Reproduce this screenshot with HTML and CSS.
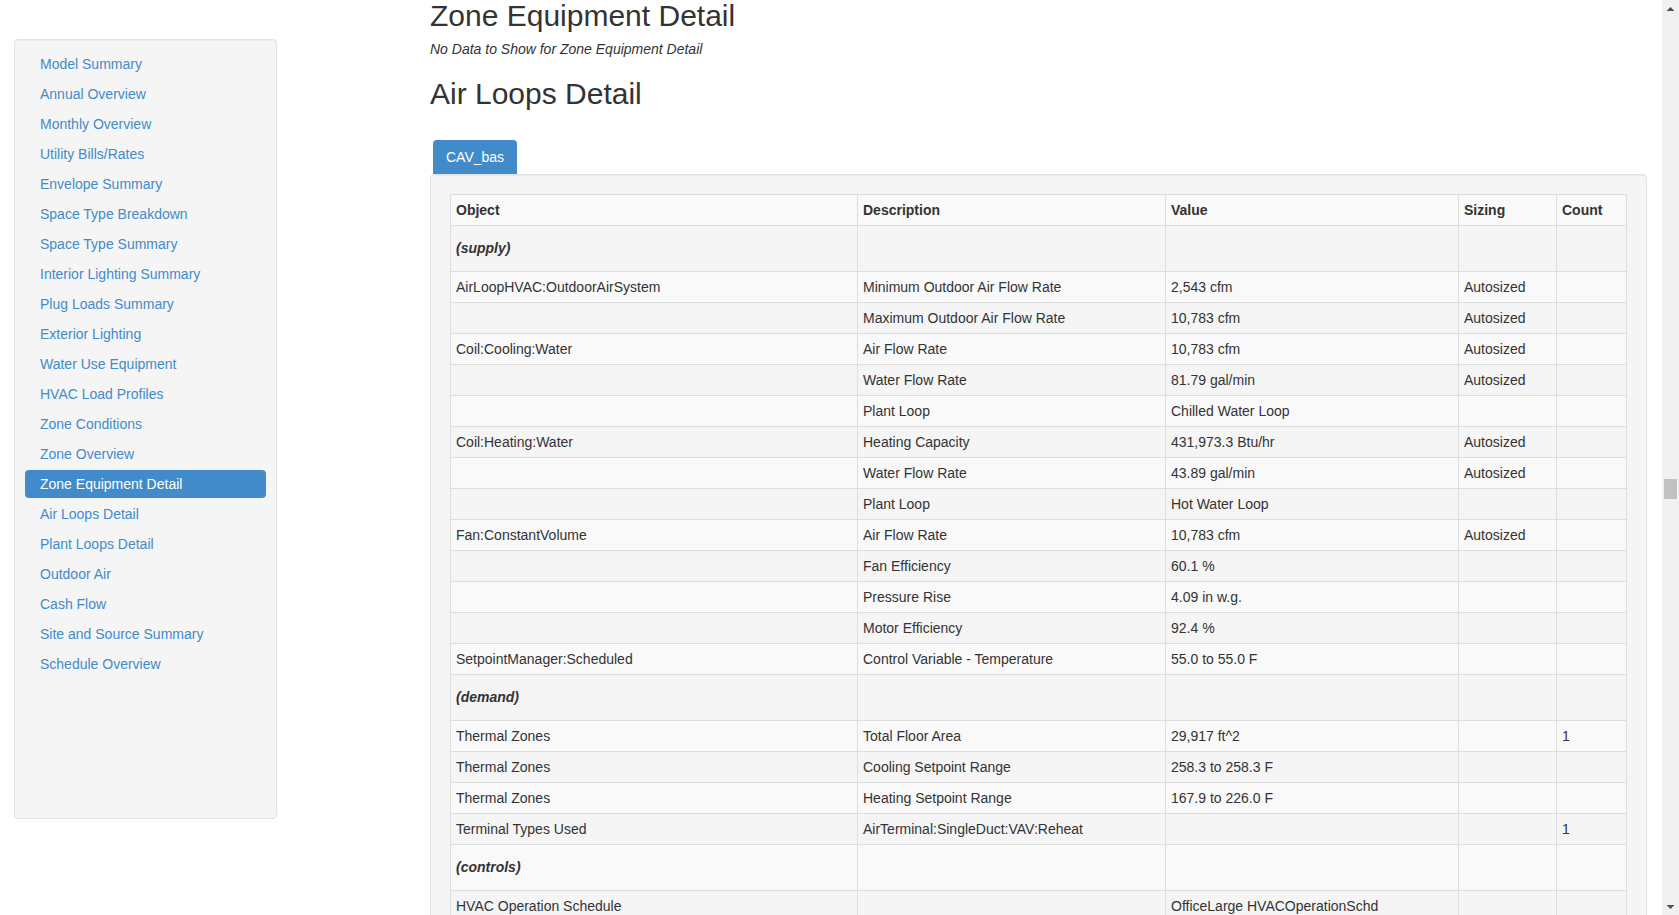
FILE: index.html
```html
<!DOCTYPE html>
<html>
<head>
<meta charset="utf-8">
<title>Report</title>
<link rel="stylesheet" href="styles.css">
</head>
<body>
<div class="viewport">
  <div class="side-col">
    <div class="well sidebar">
      <ul class="nav">
        <li><a>Model Summary</a></li>
        <li><a>Annual Overview</a></li>
        <li><a>Monthly Overview</a></li>
        <li><a>Utility Bills/Rates</a></li>
        <li><a>Envelope Summary</a></li>
        <li><a>Space Type Breakdown</a></li>
        <li><a>Space Type Summary</a></li>
        <li><a>Interior Lighting Summary</a></li>
        <li><a>Plug Loads Summary</a></li>
        <li><a>Exterior Lighting</a></li>
        <li><a>Water Use Equipment</a></li>
        <li><a>HVAC Load Profiles</a></li>
        <li><a>Zone Conditions</a></li>
        <li><a>Zone Overview</a></li>
        <li class="active"><a>Zone Equipment Detail</a></li>
        <li><a>Air Loops Detail</a></li>
        <li><a>Plant Loops Detail</a></li>
        <li><a>Outdoor Air</a></li>
        <li><a>Cash Flow</a></li>
        <li><a>Site and Source Summary</a></li>
        <li><a>Schedule Overview</a></li>
      </ul>
    </div>
  </div>
  <div class="main-col">
    <h2 class="h-first">Zone Equipment Detail</h2>
    <p class="nodata">No Data to Show for Zone Equipment Detail</p>
    <h2 class="h-second">Air Loops Detail</h2>
    <ul class="tabs">
      <li class="tab active"><a>CAV_bas</a></li>
    </ul>
    <div class="well panel">
      <table class="data">
        <colgroup>
          <col class="c-obj"><col class="c-desc"><col class="c-val"><col class="c-size"><col class="c-count">
        </colgroup>
        <tbody>
          <tr class="head"><td>Object</td><td>Description</td><td>Value</td><td>Sizing</td><td>Count</td></tr>
          <tr class="group"><td>(supply)</td><td></td><td></td><td></td><td></td></tr>
          <tr><td>AirLoopHVAC:OutdoorAirSystem</td><td>Minimum Outdoor Air Flow Rate</td><td>2,543 cfm</td><td>Autosized</td><td></td></tr>
          <tr><td></td><td>Maximum Outdoor Air Flow Rate</td><td>10,783 cfm</td><td>Autosized</td><td></td></tr>
          <tr><td>Coil:Cooling:Water</td><td>Air Flow Rate</td><td>10,783 cfm</td><td>Autosized</td><td></td></tr>
          <tr><td></td><td>Water Flow Rate</td><td>81.79 gal/min</td><td>Autosized</td><td></td></tr>
          <tr><td></td><td>Plant Loop</td><td>Chilled Water Loop</td><td></td><td></td></tr>
          <tr><td>Coil:Heating:Water</td><td>Heating Capacity</td><td>431,973.3 Btu/hr</td><td>Autosized</td><td></td></tr>
          <tr><td></td><td>Water Flow Rate</td><td>43.89 gal/min</td><td>Autosized</td><td></td></tr>
          <tr><td></td><td>Plant Loop</td><td>Hot Water Loop</td><td></td><td></td></tr>
          <tr><td>Fan:ConstantVolume</td><td>Air Flow Rate</td><td>10,783 cfm</td><td>Autosized</td><td></td></tr>
          <tr><td></td><td>Fan Efficiency</td><td>60.1 %</td><td></td><td></td></tr>
          <tr><td></td><td>Pressure Rise</td><td>4.09 in w.g.</td><td></td><td></td></tr>
          <tr><td></td><td>Motor Efficiency</td><td>92.4 %</td><td></td><td></td></tr>
          <tr><td>SetpointManager:Scheduled</td><td>Control Variable - Temperature</td><td>55.0 to 55.0 F</td><td></td><td></td></tr>
          <tr class="group"><td>(demand)</td><td></td><td></td><td></td><td></td></tr>
          <tr><td>Thermal Zones</td><td>Total Floor Area</td><td>29,917 ft^2</td><td></td><td>1</td></tr>
          <tr><td>Thermal Zones</td><td>Cooling Setpoint Range</td><td>258.3 to 258.3 F</td><td></td><td></td></tr>
          <tr><td>Thermal Zones</td><td>Heating Setpoint Range</td><td>167.9 to 226.0 F</td><td></td><td></td></tr>
          <tr><td>Terminal Types Used</td><td>AirTerminal:SingleDuct:VAV:Reheat</td><td></td><td></td><td>1</td></tr>
          <tr class="group"><td>(controls)</td><td></td><td></td><td></td><td></td></tr>
          <tr><td>HVAC Operation Schedule</td><td></td><td>OfficeLarge HVACOperationSchd</td><td></td><td></td></tr>
        </tbody>
      </table>
    </div>
  </div>
</div>
<div class="scrollbar">
  <div class="sb-btn"><svg width="9" height="6" viewBox="0 0 9 6"><path d="M0.5 5 L4.5 1 L8.5 5 Z" fill="#505050"/></svg></div>
  <div class="sb-track"><div class="sb-thumb"></div></div>
  <div class="sb-btn"><svg width="9" height="6" viewBox="0 0 9 6"><path d="M0.5 1 L4.5 5 L8.5 1 Z" fill="#505050"/></svg></div>
</div>
</body>
</html>
```
FILE: styles.css
```css
html, body {
  margin: 0;
  padding: 0;
  height: 100%;
  overflow: hidden;
}
body {
  display: flex;
  font-family: "Liberation Sans", Arial, sans-serif;
  font-size: 14px;
  line-height: 20px;
  color: #333;
  background: #fff;
}
.viewport {
  flex: 1;
  display: flex;
  overflow: hidden;
  min-width: 0;
}
.side-col {
  width: 416px;
  flex: none;
  padding-left: 14px;
  box-sizing: border-box;
}
.well {
  background: #f5f5f5;
  border: 1px solid #e3e3e3;
  border-radius: 4px;
  box-shadow: inset 0 1px 1px rgba(0,0,0,0.05);
}
.sidebar {
  margin-top: 39px;
  width: 263px;
  height: 780px;
  box-sizing: border-box;
  padding: 10px;
}
.nav {
  list-style: none;
  margin: 0;
  padding: 0;
}
.nav li + li {
  margin-top: 2px;
}
.nav a {
  display: block;
  padding: 4px 15px;
  border-radius: 4px;
  color: #428bca;
  line-height: 20px;
}
.nav li.active a {
  background: #428bca;
  color: #fff;
}
.main-col {
  flex: 1;
  min-width: 0;
  padding: 0 15px 0 14px;
}
h2 {
  font-weight: 500;
  font-size: 30px;
  line-height: 32px;
  margin: 0;
  color: #333;
}
.nodata {
  font-style: italic;
  margin: 7px 0 0;
}
.h-second {
  margin-top: 19px;
}
.tabs {
  list-style: none;
  margin: 30px 0 0;
  padding: 0 0 0 3px;
  display: flex;
}
.tab a {
  display: block;
  padding: 7px 13px;
  background: #428bca;
  color: #fff;
  border-radius: 4px 4px 0 0;
}
.panel {
  padding: 19px;
}
.data {
  width: 100%;
  border-collapse: collapse;
  table-layout: fixed;
  border: 1px solid #ddd;
}
.c-obj { width: 407px; }
.c-desc { width: 308px; }
.c-val { width: 293px; }
.c-size { width: 98px; }
.c-count { width: 70px; }
.data td {
  border: 1px solid #ddd;
  padding: 5px;
  line-height: 20px;
  height: 20px;
  vertical-align: top;
  white-space: nowrap;
  overflow: hidden;
}
.data tr:nth-child(odd) td {
  background: #f9f9f9;
}
.data tr.head td {
  font-weight: bold;
}
.data tr.group td {
  padding: 12px 5px 13px;
  font-weight: bold;
  font-style: italic;
}
.scrollbar {
  width: 17px;
  flex: none;
  background: #f1f1f1;
  display: flex;
  flex-direction: column;
}
.sb-btn {
  height: 17px;
  display: flex;
  align-items: center;
  justify-content: center;
  flex: none;
}
.sb-track {
  flex: 1;
  padding: 462px 2px 0;
}
.sb-thumb {
  height: 20px;
  background: #c1c1c1;
}
```
